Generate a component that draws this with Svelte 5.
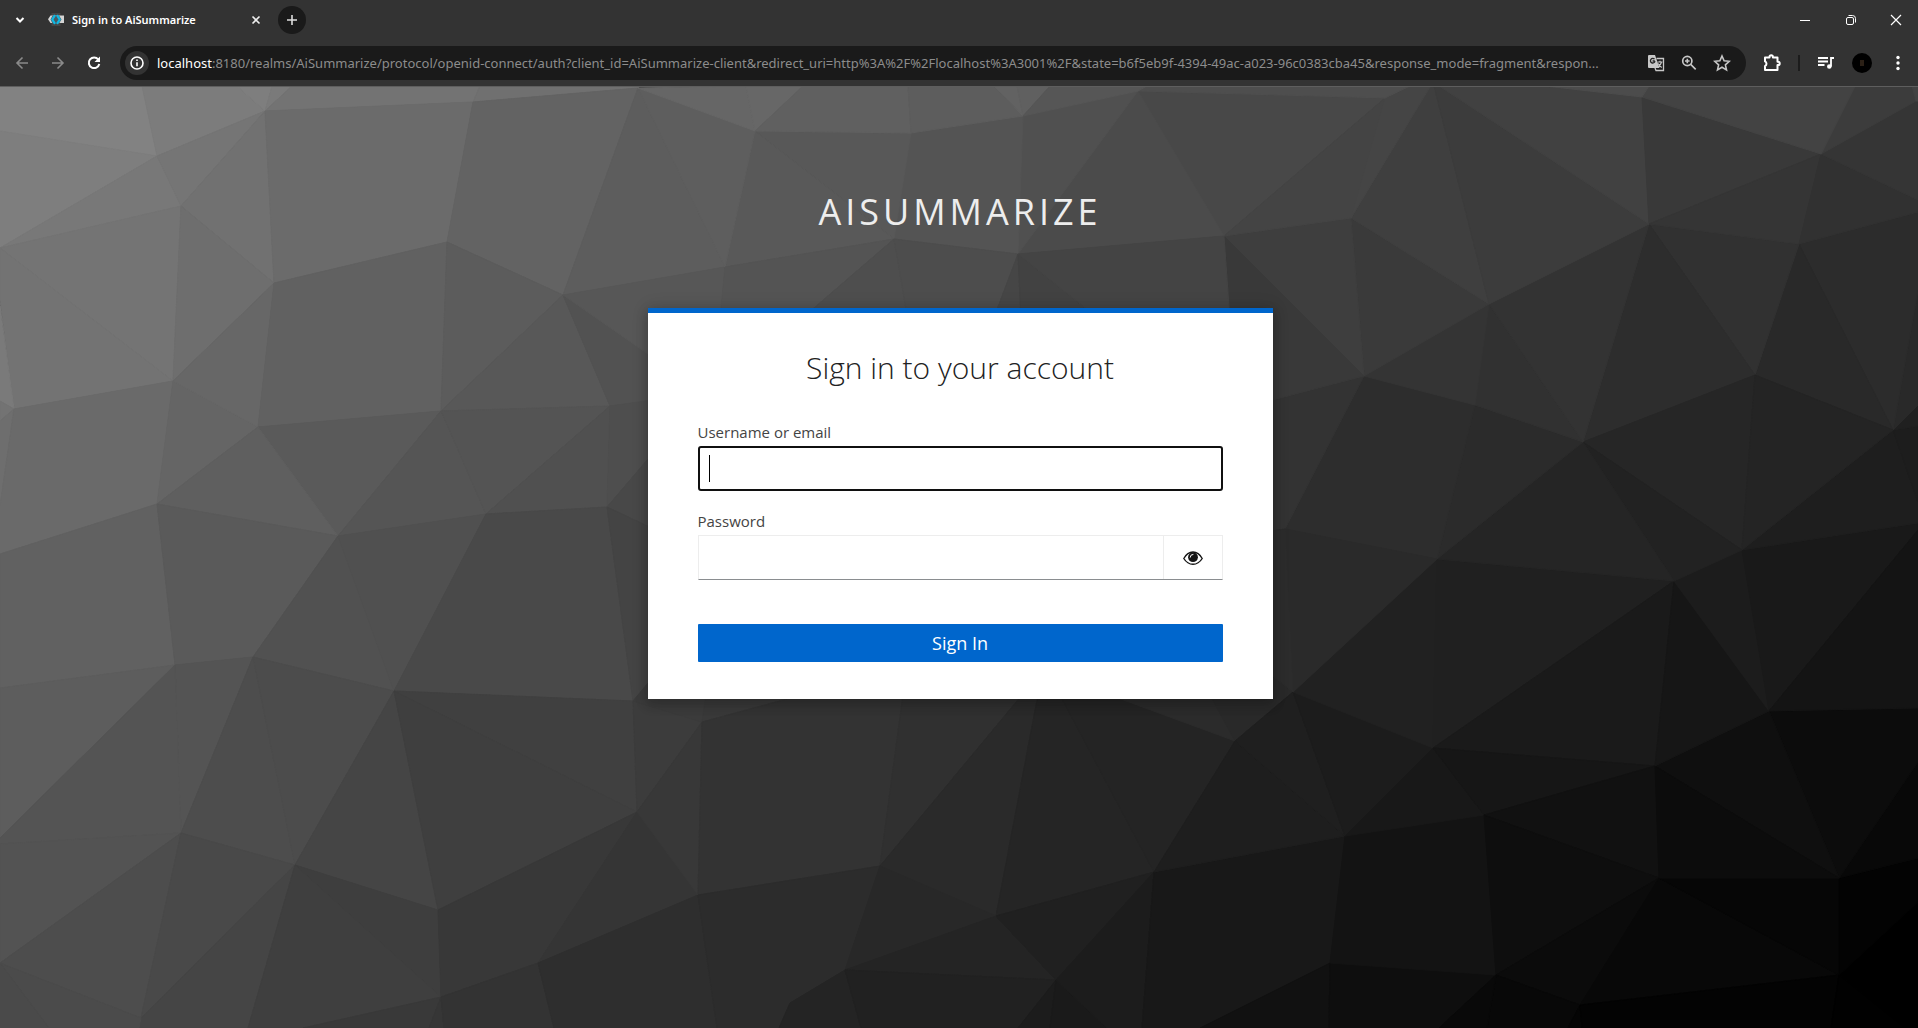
<script>
  // Vertices of the low-poly backdrop, on a 1918 x 941 canvas that starts at y = 87.
  const V = {
    A: [0, 131], B: [157, 156], C: [265, 111], D: [181, 206], E: [0, 248], F: [274, 283],
    G: [447, 242], H: [473, 102], I: [563, 295], J: [638, 88], K: [173, 381], L: [14, 409],
    M: [258, 427], N: [441, 411], O: [610, 406], P: [157, 504], Q: [338, 536], R: [486, 514],
    S: [607, 507], T: [0, 554], U: [175, 665], W1: [253, 657], W: [394, 691], X: [633, 701],
    Y: [181, 833], Z: [295, 865], a: [637, 812], b: [438, 910], c: [0, 963], d: [141, 1018],
    e: [441, 997], f: [538, 963], g: [755, 131], h: [911, 133], i: [1023, 116], j: [894, 239],
    k: [1018, 254], l: [1138, 91], m: [1224, 236], n: [725, 267], o: [1385, 98], p: [1351, 218],
    q: [1489, 304], r: [1649, 224], s: [1642, 97], t: [1821, 154], u: [1799, 244], v: [1364, 376],
    w: [1475, 405], x: [1583, 442], y: [1755, 375], z: [1893, 430], aa: [1742, 550],
    ab: [1285, 529], ac: [1437, 559], ad: [1674, 581], ae: [1293, 692], af: [1433, 748],
    ag: [1655, 766], ah: [1769, 711], ai: [1484, 815], aj: [1345, 836], ak: [1659, 878],
    al: [1839, 878], am: [1330, 963], an: [1496, 975], ao: [1580, 1005], ap: [1839, 975],
    aq: [702, 722], ar: [880, 866], as: [698, 895], at: [996, 916], au: [845, 970],
    av: [1154, 872], aw: [1056, 980], ax: [790, 1003], ay: [1235, 741], TA: [1433, 82]
  };

  // Each face: grey level, then vertex names or "x,y" points.
  const faces = `
130 0,86 142,86 B A
124 142,86 237,86 C B
126 237,86 272,86 C
122 272,86 292,86 C
115 292,86 480,86 H C
112 480,86 640,86 J H
126 A B E
120 B D E
117 B C D
113 C F D
107 C H G F
99 H J I G
93 J n I
116 E D K
115 E K L 0,300
110 D F K
122 0,306 L 0,401
115 0,401 L 0,421
110 0,421 L 0,506
106 L K P T 0,506
101 K M P
103 K F M
97 F G N M
92 G I N
88 I O N
82 I 648,354 648,401 O
87 I n 720,320 648,354
90 M N Q
95 P M Q
85 N R Q
84 N O R
80 O S R
78 O 660,399 660,445 S
97 T P U 0,688
90 P Q W1 U
81 Q W W1
80 Q R W
73 R S X W
72 S 660,445 660,532
68 S 660,532 660,670 X
93 0,688 U 0,838
84 U W1 Y
84 U Y 0,844 0,838
77 W1 Z Y
76 W1 W Z
69 W b Z
64 W X a
63 W a b
83 Y c 0,844
77 Y d c
73 Y Z d
69 d Z 248,1028 139,1028
75 c d 139,1028 49,1028
74 c 49,1028 0,1028
62 Z b e
63 Z e 303,1028 248,1028
57 303,1028 e 429,1028
54 e 429,1028 444,1028
56 b a f e
53 a as f
51 e f 554,1028 444,1028
46 f as 717,1028 554,1028
60 X aq a
56 a aq as
59 X 648,683 706,695 aq
57 706,695 820,690 aq
51 aq 820,690 903,695 ar as
48 903,695 1022,695 ar
42 ar 1022,695 1038,695 at
37 at 1038,695 1060,695 av
36 1060,695 1110,695 ay av
43 1110,695 1210,695 ay
41 1210,695 1273,670 ae ay
44 as ar au ax 779,1028 717,1028
40 ar at au
36 au at aw
36 ax au 861,1028 779,1028
33 au aw 1018,1028 861,1028
32 at av aw
28 aw 1018,1028 1050,1028
26 aw 1050,1028 1107,1028
28 aw av 1142,1028 1107,1028
24 av aj am 1200,1028 1142,1028
30 av ay aj
31 ay ae aj
17 am 1200,1028 1329,1028
14 am an 1439,1028 1329,1028
19 aj ai an am
28 ae af aj
24 af ai aj
33 ac af ae
32 ac ad af
26 af ad ag
22 af ag ai
17 ai ag ak
14 ai ak an
11 an ak ao
8 ak ap ao
6 ak al ap
8 an ao 1568,1028 1487,1028
9 an 1439,1028 1487,1028
5 ao 1568,1028 1582,1028
3 ao ap 1831,1028 1582,1028
1 ap 1831,1028 1905,1028
0 ap 1905,1028 1918,1028 1918,902
3 al 1918,858 1918,902 ap
8 al 1918,762 1918,858
12 ah 1918,708 1918,762 al
15 ag ah al
12 ag al ak
22 ad ah ag
28 ad aa ah
25 aa 1918,523 1918,530 ah
20 ah 1918,530 1918,708
30 aa z 1918,502 1918,523
29 z 1918,426 1918,502
32 z 1918,405 1918,426
41 z 1918,290 1918,405
44 u 1918,212 1918,290 z
41 u z y
49 r u y
45 r y x
38 x y aa
36 y z aa
34 x aa ad
37 x ad ac
43 w x ac
45 v w ac ab
51 v ab 1265,532 1265,402
42 ab ac ae
44 1265,532 ab ae 1265,670
49 q x w
51 q r x
52 v q w
58 p q v
62 p m v
57 m 1230,320 1265,402 v
63 p TA q
60 TA r q
65 TA 1545,86 s r
57 s t r
53 r t u
49 t 1918,200 1918,212 u
53 t 1916,101 1918,101 1918,200
60 t 1855,86 1912,86 1916,101
66 1912,86 1918,86 1918,101 1916,101
67 s 1649,86 1855,86 t
76 1545,86 1649,86 s
72 l o m
68 o p m
69 o 1410,86 TA p
78 l 1147,86 1410,86 o
75 l m k
80 i l k
84 h i k j
88 g h j
89 g j n
94 J g n
102 J 746,86 g
103 746,86 803,86 g
96 g 803,86 908,86 h
93 h 908,86 994,86 i
98 994,86 1017,86 i
96 1017,86 1050,86 i
86 1050,86 1147,86 l i
84 n j 800,320 720,320
78 j 800,320 908,320
77 j k 993,320 908,320
70 k 993,320 1021,320
66 k 1021,320 1100,320
68 k m 1230,320 1100,320`
    .trim()
    .split('\n')
    .map((line) => {
      const [grey, ...pts] = line.split(' ');
      return {
        fill: `rgb(${grey},${grey},${grey})`,
        points: pts.map((p) => (V[p] ? V[p].join(',') : p)).join(' ')
      };
    });

  let username = $state('');
  let password = $state('');
  let visible = $state(false);
</script>

<div class="browser">
  <header class="chrome">
    <div class="tabs">
      <button class="icon search" aria-label="Search tabs">
        <svg width="12" height="12" viewBox="0 0 12 12"><path d="M2.5 4 6 7.500 9.500 4" fill="none" stroke="#fff" stroke-width="2" /></svg>
      </button>
      <div class="tab">
        <svg width="16" height="16" viewBox="0 0 16 16" aria-hidden="true">
          <path d="M3.500 1h9v13h-9z" fill="#454545" />
          <path d="M2.500 3.500H16V11H2.500L0 7.300z" fill="#d4d4d4" />
          <path d="M4.500 3.500h6.500l2.500 4-2.500 4H4.500L2.500 7.500z" fill="#4a5a60" />
          <path d="M7 3.200 4.300 7.500 7 11.800M9 3.200l2.700 4.300L9 11.800" fill="none" stroke="#10b8e4" stroke-width="2.200" />
        </svg>
        <span class="title">Sign in to AiSummarize</span>
        <button class="icon close" aria-label="Close tab">
          <svg width="10" height="10" viewBox="0 0 10 10"><path d="m1.500 1.500 7 7m0-7-7 7" stroke="#eee" stroke-width="1.600" /></svg>
        </button>
      </div>
      <button class="icon new" aria-label="New tab">
        <svg width="12" height="12" viewBox="0 0 12 12"><path d="M6 1v10M1 6h10" stroke="#ddd" stroke-width="1.600" /></svg>
      </button>
      <div class="window">
        <button class="icon" aria-label="Minimize">
          <svg width="12" height="12" viewBox="0 0 12 12"><path d="M1 6.500h10" stroke="#fff" /></svg>
        </button>
        <button class="icon" aria-label="Restore">
          <svg width="12" height="12" viewBox="0 0 12 12"><g fill="none" stroke="#fff"><rect x="1.500" y="3.500" width="7" height="7" rx="1.500" /><path d="M3.500 1.500h4a3 3 0 0 1 3 3v4" /></g></svg>
        </button>
        <button class="icon" aria-label="Close">
          <svg width="12" height="12" viewBox="0 0 12 12"><path d="m1 1 10 10m0-10L1 11" stroke="#fff" stroke-width="1.200" /></svg>
        </button>
      </div>
    </div>

    <div class="toolbar">
      <button class="icon nav" aria-label="Back">
        <svg width="14" height="14" viewBox="0 0 14 14"><path d="M13 7H2m5.500-5.500L2 7l5.500 5.500" fill="none" stroke="#8a8a8a" stroke-width="1.600" /></svg>
      </button>
      <button class="icon nav" aria-label="Forward">
        <svg width="14" height="14" viewBox="0 0 14 14"><path d="M1 7h11M6.500 1.500 12 7l-5.500 5.500" fill="none" stroke="#8a8a8a" stroke-width="1.600" /></svg>
      </button>
      <button class="icon nav" aria-label="Reload">
        <svg width="14" height="14" viewBox="0 0 14 14"><path d="M11.300 3.500A5.300 5.300 0 1 0 12.300 8" fill="none" stroke="#fff" stroke-width="2" /><path d="M13 .500V6H7.500z" fill="#fff" /></svg>
      </button>
      <div class="omnibox">
        <button class="icon info" aria-label="Site information">
          <svg width="14" height="14" viewBox="0 0 14 14"><circle cx="7" cy="7" r="6" fill="none" stroke="#fff" stroke-width="1.600" /><path d="M7 6.300v4M7 3.500v1.600" stroke="#fff" stroke-width="1.600" /></svg>
        </button>
        <div class="url"><b>localhost</b>:8180/realms/AiSummarize/protocol/openid-connect/auth?client_id=AiSummarize-client&amp;redirect_uri=http%3A%2F%2Flocalhost%3A3001%2F&amp;state=b6f5eb9f-4394-49ac-a023-96c0383cba45&amp;response_mode=fragment&amp;respon...</div>
        <button class="icon" aria-label="Translate this page">
          <svg width="18" height="18" viewBox="0 0 18 18">
            <path d="M2 1h6l4.500 13H2a1 1 0 0 1-1-1V2a1 1 0 0 1 1-1z" fill="#c7c7c7" />
            <path d="M7.800 7H5.600M7.500 5.200a2.300 2.300 0 1 0 .5 2" fill="none" stroke="#222" stroke-width="1.300" />
            <path d="M9.500 4.500h7v12H9l-1-2.500" fill="none" stroke="#c7c7c7" stroke-width="1.300" />
            <path d="M10.500 8h5M13 6.800V8m1.500 0c-.5 2-1.500 3.500-3 4.500m-.3-3c.8 1.700 2 3 3.500 4" fill="none" stroke="#c7c7c7" stroke-width="1.200" />
          </svg>
        </button>
        <button class="icon" aria-label="Zoom">
          <svg width="16" height="16" viewBox="0 0 16 16"><circle cx="6.300" cy="6" r="4.600" fill="none" stroke="#c7c7c7" stroke-width="1.700" /><path d="m9.700 9.400 5 5M4 6h4.600M6.300 3.700v4.600" stroke="#c7c7c7" stroke-width="1.600" /></svg>
        </button>
        <button class="icon" aria-label="Bookmark this tab">
          <svg width="18" height="18" viewBox="0 0 18 18"><path d="m9 2 2.100 4.800 5.200.5-3.900 3.500 1.100 5.100L9 13.200l-4.500 2.700 1.100-5.100-3.900-3.500 5.200-.5z" fill="none" stroke="#c7c7c7" stroke-width="1.600" /></svg>
        </button>
      </div>
      <div class="actions">
        <button class="icon" aria-label="Extensions">
          <svg width="18" height="18" viewBox="0 0 18 18"><path d="M2 3.500h4.500V3a1.700 1.700 0 0 1 3.400 0v.5h4.600v4.200h.5a1.700 1.700 0 0 1 0 3.400h-.5v4.800H2v-3.800a2.600 2.600 0 0 0 0-4.700z" fill="none" stroke="#fff" stroke-width="2" stroke-linejoin="round" /></svg>
        </button>
        <span class="divider"></span>
        <button class="icon" aria-label="Media controls">
          <svg width="18" height="16" viewBox="0 0 18 16"><path d="M1 3h10M1 6.500h10M1 10h6.500" stroke="#fff" stroke-width="1.800" /><path d="M17 3h-3v8.500" fill="none" stroke="#fff" stroke-width="1.800" /><circle cx="12.300" cy="11.500" r="2.300" fill="#fff" /></svg>
        </button>
        <button class="icon avatar" aria-label="Profile"><span></span></button>
        <button class="icon menu" aria-label="Menu">
          <svg width="4" height="16" viewBox="0 0 4 16" fill="#fff"><circle cx="2" cy="2.500" r="1.700" /><circle cx="2" cy="8" r="1.700" /><circle cx="2" cy="13.500" r="1.700" /></svg>
        </button>
      </div>
    </div>
  </header>

  <main>
    <svg class="backdrop" viewBox="0 87 1918 941" preserveAspectRatio="xMidYMid slice" aria-hidden="true">
      {#each faces as face}
        <polygon points={face.points} fill={face.fill} stroke={face.fill} />
      {/each}
    </svg>
    <h1>AISUMMARIZE</h1>
    <section class="card">
      <h2>Sign in to your account</h2>
      <form onsubmit={(event) => event.preventDefault()}>
        <label for="username">Username or email</label>
        <div class="field focused">
          <input id="username" type="text" autocomplete="username" bind:value={username} />
          <i class="caret"></i>
        </div>
        <label for="password">Password</label>
        <div class="field group">
          <input id="password" type={visible ? 'text' : 'password'} autocomplete="current-password" bind:value={password} />
          <button type="button" aria-label="Show password" onclick={() => (visible = !visible)}>
            <svg width="20" height="16" viewBox="0 0 20 16">
              <path d="M.8 8.500C3 4.500 6.200 2 10 2s7 2.500 9.200 6.500C17 12 13.800 14.300 10 14.300S3 12 .8 8.500z" fill="none" stroke="#151515" stroke-width="1.400" />
              <circle cx="10" cy="7.200" r="4.900" fill="#151515" />
              <path d="M7.200 7.200A2.800 2.800 0 0 1 10 4.400" fill="none" stroke="#fff" stroke-width="1" stroke-linecap="round" />
            </svg>
          </button>
        </div>
        <button class="submit" type="submit">Sign In</button>
      </form>
    </section>
  </main>
</div>

<style>
  :global(body) {
    margin: 0;
  }

  .browser {
    min-height: 100vh;
    display: flex;
    flex-direction: column;
    font-family: 'Open Sans', 'Noto Sans', sans-serif;
  }

  button {
    font: inherit;
    cursor: pointer;
  }

  .icon {
    display: flex;
    align-items: center;
    justify-content: center;
    flex: none;
    padding: 0;
    border: 0;
    border-radius: 50%;
    background: none;
  }

  .icon svg,
  .tab svg {
    display: block;
    flex: none;
  }

  .chrome {
    background: #333;
    border-bottom: 1px solid #5e5e5e;
    font-family: 'Noto Sans', 'Open Sans', sans-serif;
  }

  .tabs {
    display: flex;
    align-items: center;
    height: 40px;
    padding-left: 8px;
  }

  .search {
    width: 24px;
    height: 24px;
  }

  .tab {
    display: flex;
    align-items: center;
    gap: 8px;
    width: 216px;
    margin-left: 16px;
  }

  .title {
    flex: 1;
    color: #fff;
    font-size: 11px;
    font-weight: 600;
    line-height: 16px;
    white-space: nowrap;
  }

  .close {
    width: 16px;
    height: 16px;
  }

  .new {
    width: 28px;
    height: 28px;
    margin-left: 14px;
    background: #1a1a1a;
  }

  .window {
    display: flex;
    margin-left: auto;
  }

  .window .icon {
    width: 46px;
    height: 40px;
    border-radius: 0;
  }

  .window .icon:last-child {
    width: 44px;
  }

  .toolbar {
    display: flex;
    align-items: center;
    height: 46px;
    padding: 0 18px 0 4px;
  }

  .nav {
    width: 36px;
    height: 34px;
  }

  .omnibox {
    display: flex;
    align-items: center;
    flex: 1;
    min-width: 0;
    height: 34px;
    margin-left: 8px;
    padding: 0 15px 0 5px;
    gap: 16px;
    border-radius: 17px;
    background: #1a1a1a;
  }

  .info {
    width: 24px;
    height: 24px;
    background: #333;
    margin-right: -8px;
  }

  .url {
    flex: 1;
    min-width: 0;
    overflow: hidden;
    color: #8c8c8c;
    font-size: 13px;
    line-height: 20px;
    white-space: nowrap;
  }

  .url b {
    color: #fff;
    font-weight: 400;
  }

  .actions {
    display: flex;
    align-items: center;
    gap: 17px;
    margin-left: 17px;
  }

  .divider {
    width: 2px;
    height: 16px;
    background: #1c1c1c;
  }

  .avatar {
    width: 20px;
    height: 20px;
    background: #000;
  }

  .avatar span {
    width: 4px;
    height: 6px;
    background: #2b2016;
  }

  .menu {
    margin-left: 7px;
  }

  main {
    position: relative;
    flex: 1;
    display: flex;
    flex-direction: column;
    align-items: center;
    padding: 100px 16px 40px 18px;
    box-sizing: border-box;
    background: #333;
  }

  .backdrop {
    position: absolute;
    inset: 0;
    width: 100%;
    height: 100%;
  }

  h1 {
    position: relative;
    margin: 0;
    color: #ededed;
    font-size: 36px;
    font-weight: 400;
    line-height: 50px;
    letter-spacing: 4px;
  }

  .card {
    position: relative;
    width: 100%;
    max-width: 625px;
    margin-top: 71px;
    padding: 35px 50px 37px;
    box-sizing: border-box;
    border-top: 5px solid #06c;
    background: #fff;
    box-shadow: 0 5px 10px 2px rgba(3, 3, 3, 0.16), 0 0 16px rgba(3, 3, 3, 0.14);
  }

  h2 {
    margin: 0;
    color: #222;
    font-size: 30px;
    font-weight: 300;
    line-height: 40px;
    text-align: center;
  }

  form {
    display: flex;
    flex-direction: column;
    margin-top: 32px;
  }

  label {
    color: #444;
    font-size: 15px;
    font-weight: 400;
    line-height: 24px;
  }

  .field {
    position: relative;
    display: flex;
    height: 45px;
    margin-top: 2px;
    margin-bottom: 18px;
    box-sizing: border-box;
  }

  input {
    flex: 1;
    min-width: 0;
    padding: 0 10px;
    border: 0;
    outline: 0;
    background: none;
    font: inherit;
    font-size: 20px;
  }

  .focused {
    border: 2px solid #101010;
    border-radius: 3px;
  }

  .caret {
    position: absolute;
    left: 9px;
    top: 7px;
    width: 1px;
    height: 27px;
    background: #000;
  }

  .group {
    margin-bottom: 44px;
    border: 1px solid #ededed;
    border-bottom-color: #8a8d90;
  }

  .group button {
    display: flex;
    align-items: center;
    justify-content: center;
    width: 59px;
    padding: 0;
    border: 0;
    border-left: 1px solid #ededed;
    background: none;
  }

  .submit {
    height: 38px;
    padding: 0;
    border: 0;
    border-radius: 1px;
    color: #fff;
    background: #06c;
    font-size: 18px;
    line-height: 24px;
  }
</style>
